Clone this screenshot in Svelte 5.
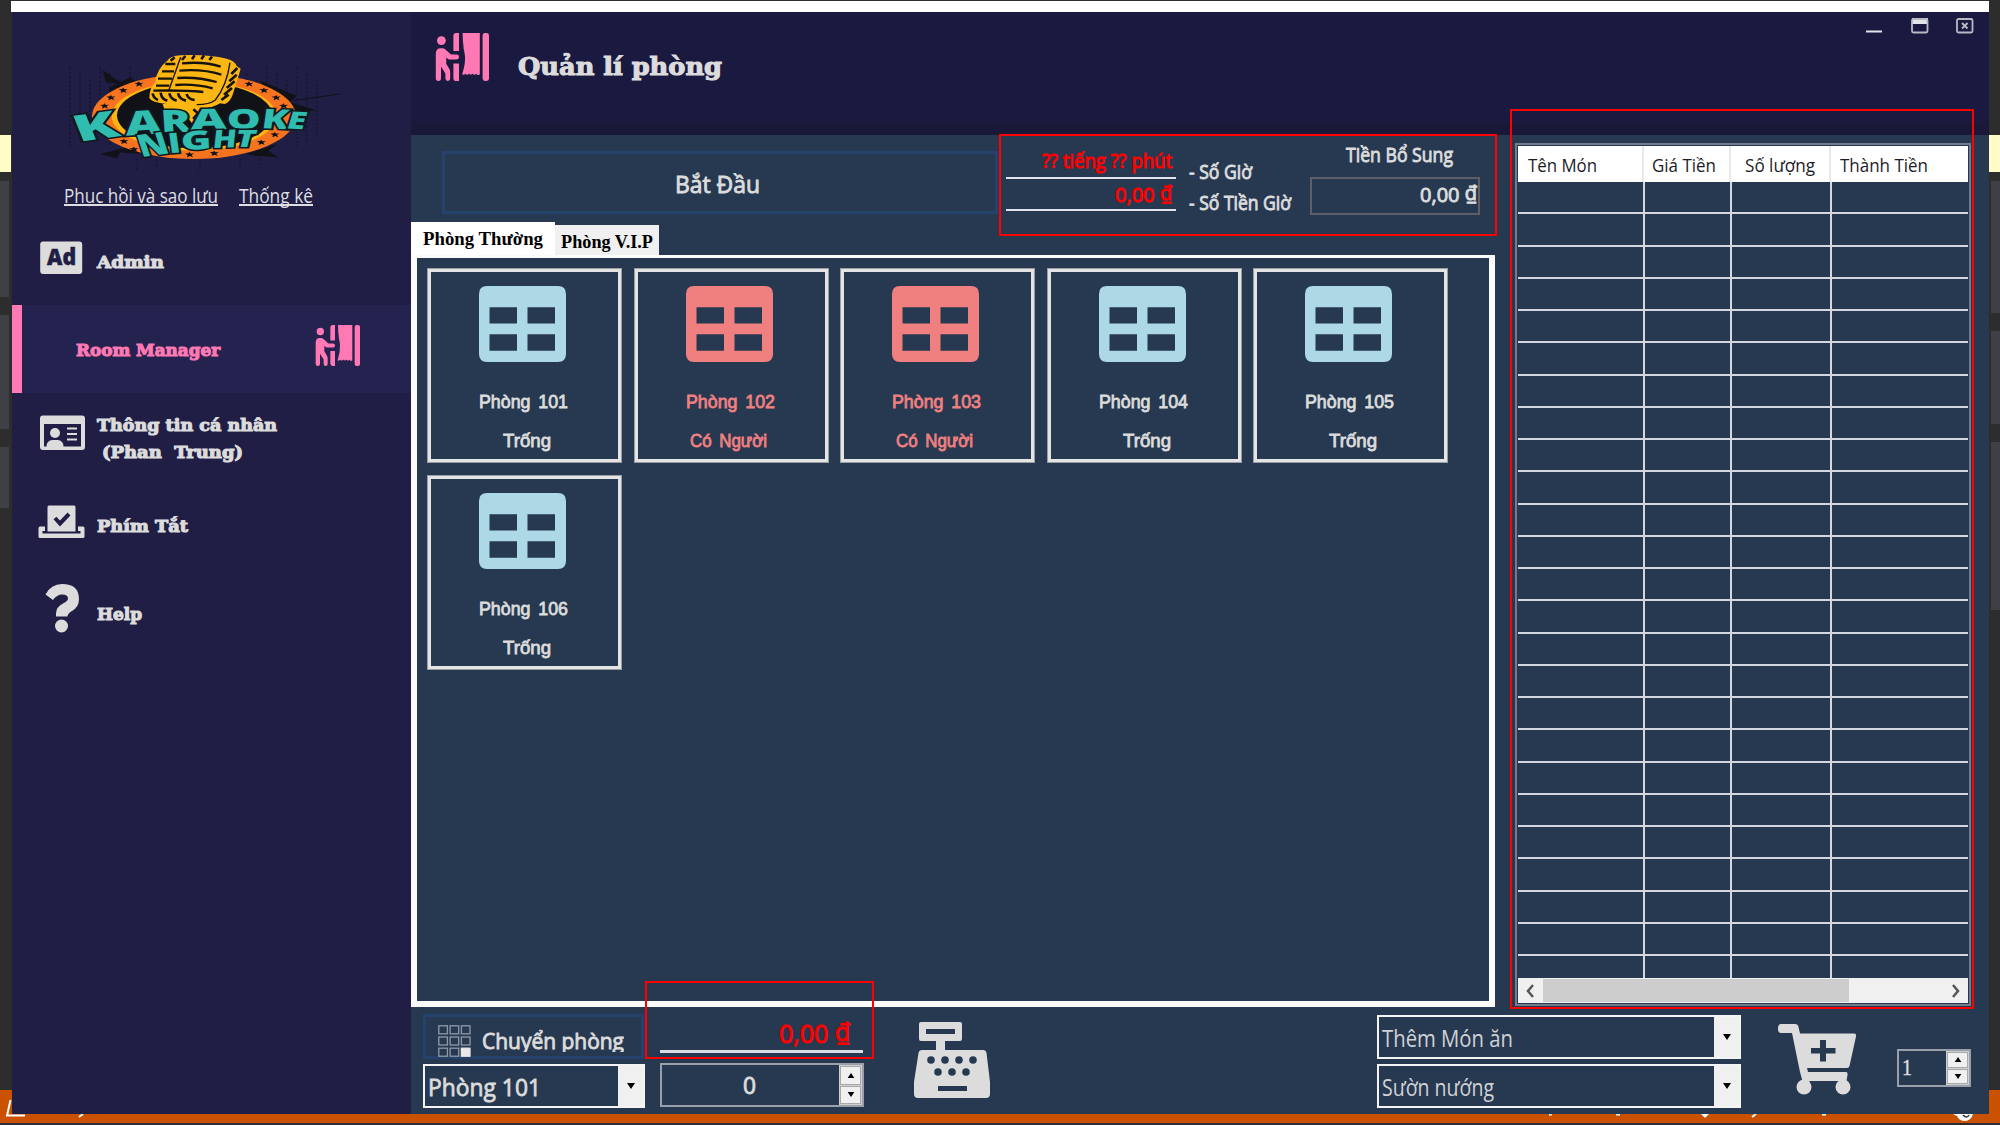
<script>
  const navItems = [
    { id: 'admin', lines: [{ text: 'Admin', w: 67 }] },
    { id: 'room', lines: [{ text: 'Room Manager', w: 144 }] },
    { id: 'profile', lines: [{ text: 'Thông tin cá nhân', w: 180 }, { text: '(Phan  Trung)', w: 141 }] },
    { id: 'keys', lines: [{ text: 'Phím Tắt', w: 91 }] },
    { id: 'help', lines: [{ text: 'Help', w: 45 }] }
  ];
  const rooms = [
    { name: 'Phòng 101', busy: false },
    { name: 'Phòng 102', busy: true },
    { name: 'Phòng 103', busy: true },
    { name: 'Phòng 104', busy: false },
    { name: 'Phòng 105', busy: false },
    { name: 'Phòng 106', busy: false }
  ];
  const columns = [
    { text: 'Tên Món', w: 69 },
    { text: 'Giá Tiền', w: 64 },
    { text: 'Số lượng', w: 70 },
    { text: 'Thành Tiền', w: 88 }
  ];
  const rows = Array.from({ length: 25 });
  // Logo letters: glyph, x, baseline, size, width, rotation, skew
  const letters = [
    ['K', 66, 294, 112, 132, -8, 14],
    ['A', 208, 275, 100, 108, -4, 0],
    ['R', 314, 264, 92, 92, 0, 4],
    ['A', 402, 257, 86, 108, -1, 0],
    ['O', 510, 255, 82, 102, 0, 0],
    ['K', 612, 253, 82, 80, 2, -6],
    ['E', 686, 253, 72, 56, 3, -14],
    ['N', 254, 340, 94, 90, -8, 10],
    ['I', 338, 328, 84, 38, -4, 4],
    ['G', 374, 319, 78, 92, -3, 0],
    ['H', 466, 312, 74, 72, -2, -8],
    ['T', 532, 308, 72, 60, 0, -14]
  ];
  const stars = [[134,186],[153,161],[190,139],[237,120],[567,120],[612,139],[649,161],[671,186],[645,272],[604,295],[463,328],[389,332],[222,316],[192,292]];
  const grid9 = [0, 1, 2, 3, 4, 5, 6, 7, 8];
</script>

{#snippet label(text, w, size, cls)}
  <svg class="label {cls}" width={w} height={size} role="img" aria-label={text}>
    <text x="0" y={size} font-size={size} textLength={w} lengthAdjust="spacingAndGlyphs" xml:space="preserve">{text}</text>
  </svg>
{/snippet}

{#snippet money(amount, w, size, cls)}
  <svg class="label {cls}" width={w} height={size} role="img" aria-label="{amount} ₫">
    <text x="0" y={size} font-size={size} textLength={w} lengthAdjust="spacingAndGlyphs" xml:space="preserve">{amount} <tspan dy="-2">₫</tspan></text>
  </svg>
{/snippet}

{#snippet curtain(w, h)}
  <svg class="curtain" width={w} height={h} viewBox="0 0 135 120" preserveAspectRatio="none">
    <circle cx="16" cy="19" r="11" />
    <path d="M2 52q0-14 12-14h5q5 0 9 5l12 11h14q6 0 6 6t-6 6H37q-4 0-7-3l-2-2v16l8 13q2 4 2 9v15q0 6-6 6t-6-6v-13l-11-17v30q0 6-6.500 6T2 114z" />
    <path d="M46 7q0-7 7-7h7v45H46zM46 76h14v44h-7q-7 0-7-7z" />
    <path d="M69 0h43v103q-5 5-9-1-5 5-9-1-5 6-9 0-4 6-9 1-4 4-8 1 8-24 7-44-1-12-3-18-3-22-3-41z" />
    <rect x="119" y="0" width="16" height="120" rx="6" />
  </svg>
{/snippet}

{#snippet spinner()}
  <div class="spinner">
    <span><svg viewBox="0 0 8 6"><path d="M4 0 8 6H0z" /></svg></span>
    <span><svg viewBox="0 0 8 6"><path d="M0 0H8L4 6z" /></svg></span>
  </div>
{/snippet}

{#snippet select(text, w, cls)}
  <div class="select {cls}">
    {@render label(text, w, 24, 'field')}
    <div class="arrow"><svg viewBox="0 0 8 6" width="8" height="6"><path d="M0 0H8L4 6z" /></svg></div>
  </div>
{/snippet}

<div class="desktop">
  <div class="backdrop left"><i class="tip"></i><i class="b1"></i><i class="b2"></i><i class="b3"></i></div>
  <div class="backdrop right"><i class="tip"></i><i class="b1"></i><i class="b2"></i><i class="b3"></i></div>
  <div class="topbar"></div>
  <svg class="status" viewBox="0 0 2000 36" width="2000" height="36">
    <path class="bg" d="M0 1h2000v33H0z" />
    <path class="edge" d="M0 34h2000v2H0z" />
    <path class="mark" d="M10.500 11 7 26.500h18" />
    <path class="mark" d="M79 28l4-3M1549 25.500h3M1616 25.500h4M1752 28l4-3M1822 25.500h4" />
    <path class="blob" d="M1701 25h8l-4 4z" />
    <path class="blob" d="M1953 25h20q-2 7-8 7t-8-5z" />
    <path class="slash" d="M1963 26q4 4 6 0" />
  </svg>

  <div class="window">
    <aside>
      <svg class="logo" width="280" height="130" viewBox="0 0 840 390">
        <g class="dots">
          {#each [30, 60, 90, 120, 150, 180, 210, 560, 590, 620, 650, 680, 710, 740, 770] as x, i}
            <path d="M{x} {70 + (i % 3) * 18}V{310 - (i % 4) * 16}" />
          {/each}
          <path d="M230 345V380M290 345V375M420 350V382M540 345V375M600 330V365" />
        </g>
        <path class="ink" d="M128 78l60 42-50-5zM150 130l60-30 30 20-100 60zM600 110l110 45-20 20 80 24-100 10zM120 330l100-25 20 25-60-5-10 18zM560 330l90-30-25 20 30 20-70-5z" />
        <path class="scratch" d="M838 150 700 170" />
        <ellipse class="ring" cx="402" cy="217" rx="306" ry="128" />
        <ellipse class="gold" cx="402" cy="216" rx="247" ry="104" />
        <ellipse class="ink" cx="404" cy="214" rx="233" ry="99" />
        {#each stars as [x, y]}
          <path class="ink" transform="translate({x} {y})" d="M0-8 3-3l10-1-7 5 4 7-9-4-9 4 2-7-8-4 10-1z" />
        {/each}
        <path class="gold" d="M308 180h140l-14 30-18 44-20-16-30-40h-52z" />
        <path class="gold" d="M322 50q8-14 40-16 80-4 138 10 24 6 30 22l12 8-10 34-14 44q-8 22-24 28l-14-2q-20 14-60 16-36 2-60-12l-40-2q-46-4-52-18 0-30 18-48 4-40 36-64z" />
        <path class="stroke" d="M366 58q70-6 116 10M316 60h30M358 80q70-6 126 12M306 82h36M352 102q60-4 118 12M294 104h42M346 123q60-4 112 10M288 125h40M280 140q90-2 150 4" />
        <path class="thin-line" d="M362 40l-36 100M510 56q-10 70-44 112-18 14-56 14" />
        <path class="fins" d="M532 72l-18 18M530 92l-22 20M524 112l-24 20M516 132l-24 20M506 152l-22 16M278 148q2 14 16 20M302 146q2 20 20 24M328 148q4 18 22 22M354 148q4 18 24 22M380 150q4 16 24 18M344 40l-12 10M376 36l-10 12M404 34l-8 12M432 34l-8 12M456 38l-8 10M400 196l14 12-12 14 14 14" />
        <g class="letters">
          {#each letters as [ch, x, y, size, w, rot, skew]}
            <text transform="translate({x - 10} {y}) rotate({rot}) skewX({skew})" font-size={size} textLength={w} lengthAdjust="spacingAndGlyphs">{ch}</text>
          {/each}
        </g>
      </svg>

      <div class="links">
        {@render label('Phục hồi và sao lưu', 154, 20, 'thin')}
        {@render label('Thống kê', 74, 20, 'thin')}
      </div>

      <nav>
        {#each navItems as item}
          <div class="item {item.id}">
            {#if item.id !== 'room'}
              <svg class="nav-icon" width="50" height="88" viewBox="0 0 50 88">
                {#if item.id === 'admin'}
                  <rect x="2.200" y="24.500" width="42" height="32.500" rx="3" />
                  <text class="ad" x="9" y="48" font-size="22" textLength="29" lengthAdjust="spacingAndGlyphs">Ad</text>
                {:else if item.id === 'profile'}
                  <path fill-rule="evenodd" d="M5 22.500h39q3 0 3 3V54q0 3-3 3H5q-3 0-3-3V25.500q0-3 3-3zM6 31v22.500h2.500q0-6 6-6.500h5q6 .5 6 6.500H43V31z" />
                  <circle cx="17" cy="40" r="5" />
                  <path class="line" d="M29 35.500h10M29 41h10M29 46.500h10" />
                {:else if item.id === 'keys'}
                  <path d="M2 45.500q-1.500 0-1.500 1.500V55.500q0 1.500 1.500 1.500h43q1.500 0 1.500-1.500v-8.500q0-1.500-1.500-1.500h-5v4.500h2.500v2.500h-38v-2.500H7V45.500zM11 24.500h25q1.500 0 1.500 1.500V50.500H9.500V26q0-1.500 1.500-1.500z" />
                  <path class="cut" d="M17 37l5 5.500 9-9.500" />
                {:else}
                  <path d="M7.500 25.500Q13 15 24 15q17 0 17 15 0 8-7 12-4.500 2.500-4.500 5.500H18v-3q0-6.500 7-10 5-2.500 5-5 0-4-6-4-5 0-9 5.500z" />
                  <circle cx="23.500" cy="57" r="6.500" />
                {/if}
              </svg>
            {/if}
            <div class="names">
              {#each item.lines as line}
                {@render label(line.text, line.w, 17, 'slab')}
              {/each}
            </div>
            {#if item.id === 'room'}{@render curtain(45, 41)}{/if}
          </div>
        {/each}
      </nav>
    </aside>

    <main>
      <header>
        {@render curtain(54, 48)}
        {@render label('Quản lí phòng', 204, 25, 'slab title')}
        <svg class="controls" width="108" height="16" viewBox="0 0 108 16">
          <path class="solid" d="M0 12.500h16v2H0zM46 0h16v6H46z" />
          <rect x="46" y="1" width="15.500" height="13.500" rx="1.500" />
          <rect x="91" y="1" width="15.500" height="13.500" rx="1.500" />
          <path d="M96 5l5.500 5.500M101.500 5 96 10.500" />
        </svg>
      </header>

      <div class="body">
        <section class="rooms">
          <div class="top">
            <button class="flat start">{@render label('Bắt Đầu', 85, 24, 'semi')}</button>
            <div class="time">
              <div class="readout">{@render label('?? tiếng ?? phút', 130, 20, 'alert')}</div>
              <div class="readout">{@render money('0,00', 57, 20, 'alert')}</div>
            </div>
            <div class="captions">
              {@render label('- Số Giờ', 63, 20, 'semi')}
              {@render label('- Số Tiền Giờ', 102, 20, 'semi')}
            </div>
            <div class="extra">
              {@render label('Tiền Bổ Sung', 107, 20, 'semi')}
              <div class="money">{@render money('0,00', 57, 20, 'semi')}</div>
            </div>
          </div>
          <div class="tabs">
            <div class="tab active">{@render label('Phòng Thường', 120, 19, 'serif')}</div>
            <div class="tab">{@render label('Phòng V.I.P', 92, 19, 'serif')}</div>
          </div>
          <div class="panel">
            {#each rooms as room}
              <div class="card" class:busy={room.busy}>
                <svg class="sheet" width="87" height="76" viewBox="0 0 87 77" preserveAspectRatio="none">
                  <path fill-rule="evenodd" d="M8 0h71q8 0 8 8v61q0 8-8 8H8q-8 0-8-8V8q0-8 8-8zM10.500 21.500V38H38V21.500zM48.500 21.500V38H76V21.500zM10.500 49v16.500H38V49zM48.500 49v16.500H76V49z" />
                </svg>
                <div class="name">{@render label(room.name, 89, 18, 'room-text')}</div>
                <div class="state">{@render label(room.busy ? 'Có Người' : 'Trống', room.busy ? 77 : 48, 18, 'room-text')}</div>
              </div>
            {/each}
          </div>
          <footer>
            <div class="transfer">
              <button class="flat move">
                <svg class="tiles" width="33" height="32" viewBox="0 0 33 32">
                  {#each grid9 as n}
                    <rect class:on={n === 8} x={(n % 3) * 11.3 + 0.8} y={Math.floor(n / 3) * 11.2 + 0.8} width="8.600" height="8" />
                  {/each}
                </svg>
                {@render label('Chuyển phòng', 142, 22, 'semi clipped')}
              </button>
              {@render select('Phòng 101', 113, 'medium')}
            </div>
            <div class="amount">
              <div class="total">{@render money('0,00', 71, 25, 'alert')}</div>
              <div class="stepper wide">{@render label('0', 13, 23, 'semi')}{@render spinner()}</div>
            </div>
            <svg class="register" width="76" height="76" viewBox="0 0 76 76">
              <path fill-rule="evenodd" d="M7 0h39q2 0 2 2v15q0 2-2 2H31v9h38q3 0 3.500 3L76 60v12q0 4-4 4H4q-4 0-4-4V60l4.500-29q.5-3 3.500-3h14v-9H7q-2 0-2-2V2q0-2 2-2zM12 7v5h29V7zM24 64v5h29v-5z" />
              <g class="keycaps"><circle cx="17" cy="38" r="3.800" /><circle cx="31" cy="38" r="3.800" /><circle cx="45" cy="38" r="3.800" /><circle cx="59" cy="38" r="3.800" /><circle cx="24" cy="50" r="3.800" /><circle cx="38" cy="50" r="3.800" /><circle cx="52" cy="50" r="3.800" /></g>
            </svg>
            <div class="foods">
              {@render select('Thêm Món ăn', 131, 'light')}
              {@render select('Sườn nướng', 112, 'light')}
            </div>
          </footer>
        </section>

        <section class="bill">
          <div class="frame">
            <div class="grid head">
              {#each columns as col}<div class="cell">{@render label(col.text, col.w, 19, 'dark')}</div>{/each}
            </div>
            <div class="lines">
              {#each rows as _}
                <div class="grid row"><i></i><i></i><i></i><i></i></div>
              {/each}
            </div>
            <div class="scroll">
              <svg width="8" height="14" viewBox="0 0 8 14"><path d="M7 1 2 7l5 6" /></svg>
              <div class="thumb"></div>
              <svg width="8" height="14" viewBox="0 0 8 14"><path d="M1 1l5 6-5 6" /></svg>
            </div>
          </div>
          <div class="order">
            <svg class="cart" width="78" height="71" viewBox="0 0 78 71">
              <path fill-rule="evenodd" d="M3 0h14q3 0 3.500 3l1.500 6.500h54q2.500 0 2 3L71.500 42q-.5 2-2.500 2H29l1 4h38q2 0 1.500 3l-1 6H31l1 2H25l-3-11L14 9H3Q0 9 0 4.500T3 0zM42 16v8h-9v5.500h9v8h6v-8h9.500V24H48v-8z" />
              <circle cx="26" cy="63" r="7.500" /><circle cx="65" cy="63" r="7.500" />
            </svg>
            <div class="stepper small">{@render label('1', 10, 24, 'roman')}{@render spinner()}</div>
          </div>
        </section>
      </div>
    </main>
  </div>

  <div class="mark-box time-box"></div>
  <div class="mark-box bill-box"></div>
  <div class="mark-box total-box"></div>
</div>

<style>
  :global(body) { margin: 0; background: #2d2d2e; }
  * { box-sizing: border-box; }
  svg { display: block; flex: none; }
  .desktop { position: relative; width: 2000px; height: 1125px; overflow: hidden; background: #2d2d2e; font-family: "Open Sans", "Noto Sans", sans-serif; }

  .backdrop { position: absolute; top: 135px; width: 11px; display: flex; flex-direction: column; }
  .backdrop.left { left: 0; }
  .backdrop.right { right: 0; }
  .backdrop i { display: block; background: #3f3f46; width: 9px; }
  .right i { align-self: flex-end; }
  .backdrop .tip { width: 11px; height: 37px; background: #fffcc8; margin-bottom: 9px; }
  .b1 { height: 116px; margin-bottom: 18px; }
  .b2 { height: 114px; margin-bottom: 18px; }
  .b3 { height: 61px; }
  .right .b1 { height: 132px; }
  .right .b2 { height: 93px; }
  .right .b3 { height: 168px; }
  .topbar { position: absolute; left: 11px; top: 1px; width: 1978px; height: 11px; background: #fff; }
  .status { position: absolute; left: 0; bottom: 0; }
  .status .bg { fill: #ca5100; }
  .status .edge { fill: #2d2d36; }
  .status .mark { fill: none; stroke: #fff; stroke-width: 2; }
  .status .blob { fill: #fff; }
  .status .slash { fill: none; stroke: #333; stroke-width: 1.500; }

  .window { position: absolute; left: 12px; top: 12px; width: 1977px; height: 1102px; display: flex; }
  aside { width: 399px; flex: none; background: #201e45; }
  main { flex: 1; min-width: 0; display: flex; flex-direction: column; background: #273951; }

  .label { overflow: visible; fill: #dcdcdc; }
  .thin { fill: #dedee2; font-weight: 400; }
  .semi { stroke: #dcdcdc; stroke-width: .9; }
  .room-text { font-family: "Liberation Sans", sans-serif; word-spacing: 3px; stroke: #dcdcdc; stroke-width: .8; }
  .alert { fill: #f00; stroke: #f00; stroke-width: 1; }
  .slab { font-family: "DejaVu Serif", serif; font-weight: 700; stroke: #dcdcdc; stroke-width: 1.100; }
  .serif { font-family: "Liberation Serif", serif; font-weight: 700; fill: #000; }
  .roman { font-family: "Liberation Serif", serif; stroke: #dcdcdc; stroke-width: .4; }
  .dark { fill: #1c1c28; }
  .label.clipped { overflow: hidden; }

  .logo { margin: 32px 0 0 48px; }
  .ink { fill: #101218; }
  .scratch { fill: none; stroke: #101218; stroke-width: 3; }
  .ring { fill: #f6741f; }
  .gold { fill: #fcb614; }
  .stroke, .fins, .thin-line { fill: none; stroke: #16130c; stroke-width: 7; }
  .fins { stroke-width: 8; }
  .thin-line { stroke-width: 4; }
  .dots path { stroke: #15152f; stroke-width: 6; stroke-dasharray: 7 6; opacity: .65; }
  .letters { font-family: "Open Sans", sans-serif; font-weight: 800; fill: #30bcae; stroke: #101820; stroke-width: 9; paint-order: stroke; }

  .links { display: flex; gap: 21px; padding: 9px 0 0 52px; height: 43px; }
  .links .label { border-bottom: 2px solid #dedee2; height: 23px; }
  .item { display: flex; height: 88px; padding-left: 26px; }
  .nav-icon { fill: #dcdcdc; margin-right: 9px; }
  .nav-icon .ad { fill: #201e45; stroke: #201e45; stroke-width: .5; font-family: "Open Sans", sans-serif; font-weight: 800; }
  .nav-icon .line { stroke: #dcdcdc; stroke-width: 2.200; }
  .nav-icon .cut { fill: none; stroke: #201e45; stroke-width: 4; }
  .names { padding-top: 34px; }
  .profile .names { padding-top: 21px; }
  .profile .names .label + .label { margin: 10px 0 0 5px; }
  .item.room { background: #24224f; border-left: 10px solid #ff79b4; padding-left: 54px; }
  .item.room .names { width: 239px; }
  .item.room .label { fill: #ff79b4; stroke: #ff79b4; }
  .item .curtain { margin-top: 20px; }
  .curtain { fill: #ff79b4; }

  header { display: flex; height: 123px; padding: 21px 15px 0 24px; background: linear-gradient(#1a1940 110px, #1a1838 110px); }
  .title { margin: 17px auto 0 29px; }
  .controls { margin-top: -15px; fill: none; stroke: #b9b9c6; stroke-width: 1.800; }
  .controls .solid { fill: #e4e4ea; stroke: none; }

  .body { flex: 1; display: flex; }
  .rooms { width: 1084px; flex: none; display: flex; flex-direction: column; }
  .top { display: flex; height: 87px; padding-left: 31px; }
  .top > * { flex: none; }
  button { margin: 0; padding: 0; font: inherit; }
  .flat { display: flex; background: transparent; border: 3px solid #24426b; }
  .start { width: 556px; height: 63px; margin-top: 16px; padding-left: 230px; padding-top: 15px; }
  .time { width: 170px; margin-left: 8px; padding-top: 12px; }
  .readout { display: flex; justify-content: flex-end; padding: 3px 4px 0 0; height: 32px; border-bottom: 2px solid #e0e3e8; }
  .readout .label { margin-top: -1px; }
  .readout:first-child { padding-top: 2px; }
  .readout:first-child .label { margin-top: -1px; }
  .readout + .readout { padding-top: 4px; }
  .captions { width: 134px; padding: 24px 0 0 13px; }
  .captions .label + .label { margin-top: 11px; }
  .extra { width: 170px; padding-top: 7px; }
  .extra > .label { margin-left: 36px; }
  .money { display: flex; justify-content: flex-end; height: 38px; margin-top: 15px; border: 2px solid #5d6066; padding: 2px 1px 0 0; }
  .money .label { margin-top: 1px; }

  .tabs { display: flex; height: 33px; align-items: flex-end; }
  .tab { height: 30px; width: 104px; padding: 4px 0 0 6px; background: #f0f0f0; }
  .tab.active { width: 144px; height: 33px; padding: 4px 0 0 12px; background: #fff; }
  .panel { height: 752px; border: 6px solid #fbfbfb; border-top-width: 3px; padding: 10px 0 0 10px; display: grid; grid-template-columns: repeat(5, 195px); grid-auto-rows: 195px; gap: 11.500px; align-content: start; }
  .card { border: 4px solid #e4e4e4; outline: 1px solid #9a9da3; outline-offset: -1px; padding-top: 14px; display: flex; flex-direction: column; }
  .sheet { margin-left: 48px; fill: #add8e6; }
  .name { padding: 28px 0 0 48px; }
  .state { padding: 21px 0 0 72px; }
  .busy .state { padding-left: 52px; }
  .busy .sheet, .busy .label { fill: #f08080; }
  .busy .label { stroke: #f08080; }

  footer { display: flex; padding-left: 12px; height: 107px; }
  footer > * { flex: none; }
  .transfer { width: 222px; padding-top: 7px; }
  .move { width: 221px; height: 45px; padding: 8px 0 0 12px; margin-bottom: 5px; }
  .tiles { fill: none; stroke: #8f99a6; stroke-width: 1.300; }
  .tiles .on { fill: #e8e8e8; stroke: #e8e8e8; }
  .move .label { margin: 2px 0 0 11px; height: 25px; }
  .select { display: flex; height: 44px; border: 2px solid #f4f4f4; padding-left: 3px; }
  .select .label { margin-top: 6px; }
  .medium .label { stroke: #dcdcdc; stroke-width: .8; }
  .light .label { fill: #cfd2d6; }
  .arrow { margin-left: auto; width: 25px; background: #f0f0f0; display: flex; align-items: center; justify-content: center; }
  .amount { width: 204px; margin-left: 15px; padding-top: 11px; }
  .total { width: 203px; height: 35px; padding: 0 13px 0 0; display: flex; justify-content: flex-end; border-bottom: 3px solid #d9dce4; }
  .stepper { display: flex; border: 2px solid #9a9faa; }
  .wide { height: 44px; margin-top: 10px; padding-left: 81px; }
  .wide .label { margin-top: 6px; }
  .spinner { margin-left: auto; width: 23px; display: flex; flex-direction: column; gap: 1px; padding: 1px; background: #d0d0d0; }
  .spinner span { flex: 1; display: flex; align-items: center; justify-content: center; background: #f0f0f0; border: 1px solid #a8a8a8; }
  .spinner svg { width: 8px; height: 5px; }
  .register { margin: 15px 0 0 50px; fill: #dcdcdc; }
  .keycaps { fill: #273951; }
  .foods { width: 364px; margin-left: 387px; padding-top: 8px; display: flex; flex-direction: column; gap: 5px; }

  .bill { flex: none; margin-left: 20px; padding-top: 8px; width: 458px; }
  .frame { width: 456px; height: 863px; border: 2px solid #707b8b; padding: 1px; display: flex; flex-direction: column; }
  .grid { display: grid; grid-template-columns: 126px 87px 100px 1fr; }
  .head { height: 36px; flex: none; background: #fff; }
  .head .cell { padding: 7px 0 0 10px; border-right: 2px solid #e8e8ea; }
  .head .cell:nth-child(2) { padding-left: 8px; }
  .head .cell:nth-child(3) { padding-left: 14px; }
  .head .cell:nth-child(4) { padding-left: 9px; border: 0; }
  .lines { flex: 1; overflow: hidden; }
  .row { height: 32.260px; grid-template-columns: 127px 87px 100px 1fr; border-bottom: 2px solid #d4d8de; }
  .row i { border-right: 2px solid #d4d8de; }
  .row i:last-child { border: 0; }
  .scroll { height: 25px; flex: none; display: flex; align-items: center; gap: 9px; padding: 0 8px; background: #f0f0f0; }
  .scroll svg { fill: none; stroke: #555; stroke-width: 2.500; }
  .thumb { width: 306px; height: 23px; background: #cdcdcd; margin-right: auto; }
  .order { display: flex; padding: 18px 0 0 263px; }
  .cart { fill: #dcdcdc; }
  .small { width: 74px; height: 38px; margin: 25px 0 0 41px; padding-left: 3px; }

  .mark-box { position: absolute; border: 2px solid #f00; }
  .time-box { left: 999px; top: 134px; width: 498px; height: 102px; }
  .bill-box { left: 1510px; top: 109px; width: 464px; height: 900px; }
  .total-box { left: 645px; top: 981px; width: 229px; height: 78px; }
</style>
